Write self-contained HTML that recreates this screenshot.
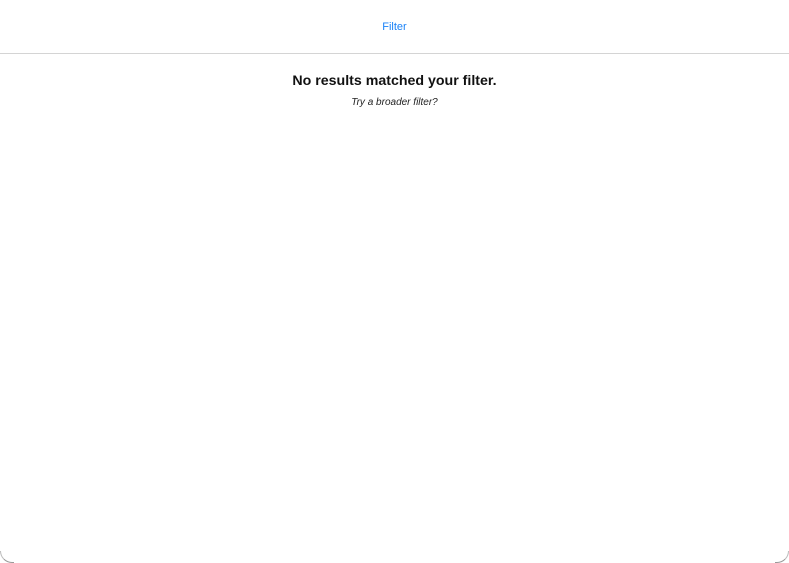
<!DOCTYPE html>
<html><head><style>
html,body{margin:0;width:789px;height:563px;background:#fff;overflow:hidden;font-family:"Liberation Sans",sans-serif;}
.f{position:absolute;top:20px;left:0;width:789px;text-align:center;color:#1a82f7;font-size:11px;line-height:14px;}
.line{position:absolute;top:53px;left:0;width:789px;height:1px;background:#d4d4d4;}
.h{position:absolute;top:73px;left:0;width:789px;text-align:center;font-weight:bold;font-size:14.2px;line-height:17px;color:#111;}
.s{position:absolute;top:97px;left:0;width:789px;text-align:center;font-style:italic;font-size:10px;line-height:12px;color:#222;}
.c{position:absolute;top:0;left:0;width:789px;height:563px;box-sizing:border-box;border-radius:0 0 12px 12px;border:1px solid transparent;border-bottom-color:#999;border-left-color:#bbb;border-right-color:#bbb;clip-path:polygon(0 551px,14px 551px,14px 563px,0 563px,0 551px,775px 551px,789px 551px,789px 563px,775px 563px,775px 551px);}
</style></head><body>
<div class="f">Filter</div>
<div class="line"></div>
<div class="h">No results matched your filter.</div>
<div class="s">Try a broader filter?</div>
<div class="c"></div>
</body></html>
